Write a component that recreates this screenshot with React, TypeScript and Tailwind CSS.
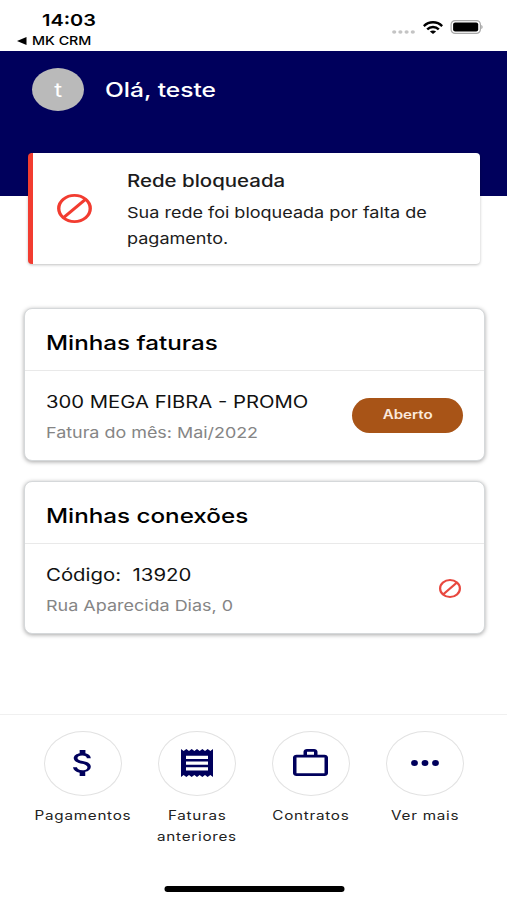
import type { ReactNode } from 'react'
import clsx from 'clsx'

interface WideProps {
  children: ReactNode
  className?: string
  center?: boolean
}

/** Texto alargado na horizontal */
function Wide({ children, className, center }: WideProps) {
  return (
    <span
      className={clsx(
        'block w-max scale-x-[1.21] whitespace-pre',
        center ? 'origin-center' : 'origin-left',
        className,
      )}
    >
      {children}
    </span>
  )
}

function BlockedIcon({ className, stroke }: { className: string; stroke: number }) {
  return (
    <svg viewBox="0 0 24 24" preserveAspectRatio="none" className={className} fill="none" stroke="currentColor" strokeWidth={stroke}>
      <circle cx="12" cy="12" r="10.8" />
      <path d="M19.6 4.4 4.4 19.6" />
    </svg>
  )
}

const ACTIONS: { labels: string[]; icon: ReactNode }[] = [
  {
    labels: ['Pagamentos'],
    icon: (
      <svg viewBox="7 3 10 18" preserveAspectRatio="none" className="mr-[3px] mb-[2px] h-[26px] w-[18px]" fill="currentColor">
        <path d="M13.900 3v2.200c1.800.5 2.900 1.700 3 3.500h-2.200c-.1-1.200-.9-1.900-2.600-1.900s-2.600.8-2.600 1.800c0 .9.7 1.600 2.900 2.100s4.500 1.400 4.500 3.900c0 1.900-1.300 3.100-3.100 3.500V21h-3.100v-2.300C8.600 18.300 7.200 17.100 7 15h2.200c.1 1.100 1 2 3.100 2 2.300 0 2.700-1.200 2.700-1.900 0-.9-.6-1.900-3-2.500-2.700-.7-4.600-1.800-4.600-4 0-1.800 1.500-3 3.300-3.400V3z" />
      </svg>
    ),
  },
  {
    labels: ['Faturas', 'anteriores'],
    icon: (
      <svg viewBox="0 0 32 28" className="mr-px mb-[2px] h-[28px] w-8" fill="currentColor">
        <path
          fillRule="evenodd"
          d="M0 0l2.670 2 2.670-2L8 2l2.670-2 2.670 2L16 0l2.670 2 2.670-2L24 2l2.670-2 2.670 2L32 0v28l-2.670-2-2.660 2L24 26l-2.670 2-2.660-2L16 28l-2.670-2-2.660 2L8 26l-2.670 2-2.660-2L0 28zM5 6.700v3.300h22V6.700zM5 12.500v3.200h22v-3.200zM5 18.200v3.200h22v-3.200z"
        />
      </svg>
    ),
  },
  {
    labels: ['Contratos'],
    icon: (
      <svg viewBox="2 2 20 19" preserveAspectRatio="none" className="mr-[2px] mb-[2px] h-[27px] w-[35px]" fill="currentColor">
        <path fillRule="evenodd" d="M14 6V4h-4v2h4zM4 8v11h16V8H4zm16-2c1.110 0 2 .89 2 2v11c0 1.110-.89 2-2 2H4c-1.110 0-2-.89-2-2V8c0-1.110.89-2 2-2h4V4c0-1.110.89-2 2-2h4c1.110 0 2 .89 2 2v2h4z" />
      </svg>
    ),
  },
  {
    labels: ['Ver mais'],
    icon: (
      <svg viewBox="0 0 28 6" preserveAspectRatio="none" className="mr-px mb-px h-1.5 w-7" fill="currentColor">
        <ellipse cx="3.500" cy="3" rx="3.400" ry="2.900" />
        <ellipse cx="14" cy="3" rx="3.400" ry="2.900" />
        <ellipse cx="24.500" cy="3" rx="3.400" ry="2.900" />
      </svg>
    ),
  },
]

function StatusBar() {
  return (
    <div className="flex h-[51px] justify-between">
      <div className="pt-[10px]">
        <Wide className="ml-[41.500px] text-[16.500px] leading-5 font-semibold">14:03</Wide>
        <div className="flex items-center pt-px pl-[17px]">
          <svg viewBox="0 0 10 8" className="mr-[5px] h-2 w-2.5" fill="currentColor">
            <path d="M0 4 9.500 0v8z" />
          </svg>
          <Wide className="text-[11.800px] leading-5 font-medium">MK CRM</Wide>
        </div>
      </div>
      <div className="mt-5 flex h-[14px] items-center pr-6">
        <svg viewBox="0 0 24 4" className="mt-[9px] mr-[7px] h-1 w-6" fill="#c4c4c4">
          <ellipse cx="2.200" cy="2" rx="2.100" ry="1.700" />
          <ellipse cx="8.400" cy="2" rx="2.100" ry="1.700" />
          <ellipse cx="14.600" cy="2" rx="2.100" ry="1.700" />
          <ellipse cx="20.800" cy="2" rx="2.100" ry="1.700" />
        </svg>
        <svg viewBox="0 0 20 13" className="mr-[7px] h-[13px] w-5" fill="none" stroke="currentColor" strokeWidth="2.500">
          <path d="M.8 5.100C6 .1 14 .1 19.200 5.100" />
          <path d="M4.200 8.300c3.300-3 8.300-3 11.600 0" />
          <path d="M10 13 6.900 10.600c1.700-1.500 4.500-1.500 6.200 0z" fill="currentColor" stroke="none" />
        </svg>
        <svg viewBox="0 0 33 14" className="h-[14px] w-[33px]">
          <rect x="1.100" y=".6" width="29.300" height="12.800" rx="4" fill="#fff" stroke="#a9a9a9" strokeWidth="1.200" />
          <rect x="3.100" y="2.400" width="25.100" height="9.200" rx="2" />
          <path d="M31.300 5c1.700.5 1.700 3.500 0 4z" fill="#a0a0a0" />
        </svg>
      </div>
    </div>
  )
}

function Card({ title, children }: { title: string; children: ReactNode }) {
  return (
    <section className="h-[153px] rounded-lg border border-[#d5d8da] bg-white shadow-[0_1px_4px_rgba(0,0,0,0.35)]">
      <div className="flex h-[62px] items-center border-b border-[#e9e9e9] pt-[7px] pl-[20.500px]">
        <Wide className="text-[20px] leading-7 font-medium">{title}</Wide>
      </div>
      <div className="flex h-[90px] items-center justify-between pr-[21px] pl-[20.500px]">{children}</div>
    </section>
  )
}

export default function App() {
  return (
    <div className="flex h-[900px] w-[507px] flex-col overflow-hidden bg-white font-[Inter,sans-serif] text-black">
      <StatusBar />

      <header className="flex h-[145px] shrink-0 items-start bg-[#00005c] pt-[17px] pl-8 text-white">
        <div className="flex h-[43px] w-[52px] items-center justify-center rounded-[50%] bg-[#bababa]">
          <Wide center className="text-[20px]">t</Wide>
        </div>
        <Wide className="ml-[21px] text-[20.300px] leading-[43px] font-medium">Olá, teste</Wide>
      </header>

      {/* Aviso de bloqueio */}
      <section className="z-10 mr-[27px] ml-7 -mt-[43px] flex h-[111px] shrink-0 overflow-hidden rounded-[4px] border-l-[5px] border-[#f23c30] bg-white shadow-[0_1px_3px_rgba(0,0,0,0.25)]">
        <BlockedIcon className="mt-[41px] ml-6 h-[29px] w-[35px] text-[#f23c30]" stroke={2.3} />
        <div className="pt-[15px] pl-[35px] text-[#1c1c1c]">
          <Wide className="text-[16.900px] leading-[26px] font-medium">Rede bloqueada</Wide>
          <Wide className="mt-[6px] text-[14.900px] leading-[26px]">{'Sua rede foi bloqueada por falta de\npagamento.'}</Wide>
        </div>
      </section>

      <main className="mt-11 flex flex-col gap-5 pr-[22px] pl-6">
        <Card title="Minhas faturas">
          <div className="pt-[3px]">
            <Wide className="text-[16.750px] leading-[31px] text-[#111]">300 MEGA FIBRA - PROMO</Wide>
            <Wide className="text-[14.800px] leading-[30px] text-[#858585]">Fatura do mês: Mai/2022</Wide>
          </div>
          <div className="mb-[2px] flex h-[35px] w-[111px] items-center justify-center rounded-full bg-[#a85417] pt-px text-[#fbe9dc]">
            <Wide center className="text-[12.500px] font-semibold">Aberto</Wide>
          </div>
        </Card>
        <Card title="Minhas conexões">
          <div className="pt-[3px]">
            <Wide className="text-[16.850px] leading-[31px] text-[#111]">{'Código:  13920'}</Wide>
            <Wide className="text-[14.850px] leading-[30px] text-[#858585]">Rua Aparecida Dias, 0</Wide>
          </div>
          <BlockedIcon className="mr-[2px] mb-[2px] h-[19px] w-[22px] text-[#e8483f]" stroke={2.4} />
        </Card>
      </main>

      <nav className="mt-20 grid grid-cols-4 border-t border-[#f0f0f0] pt-4 pr-[25px] pl-[26px]">
        {ACTIONS.map((action) => (
          <div key={action.labels[0]} className="flex flex-col items-center">
            <div className="mb-[8.500px] flex h-[65px] w-[78px] items-center justify-center rounded-[50%] border border-[#e2e2e2] text-[#00005c]">
              {action.icon}
            </div>
            {action.labels.map((label) => (
              <Wide key={label} center className="text-[12.600px] leading-[21px] tracking-[0.600px] text-[#222]">{label}</Wide>
            ))}
          </div>
        ))}
      </nav>

      <div className="mx-auto mt-auto mb-2 h-[6px] w-[180px] translate-x-[0.500px] rounded-full bg-black" />
    </div>
  )
}
